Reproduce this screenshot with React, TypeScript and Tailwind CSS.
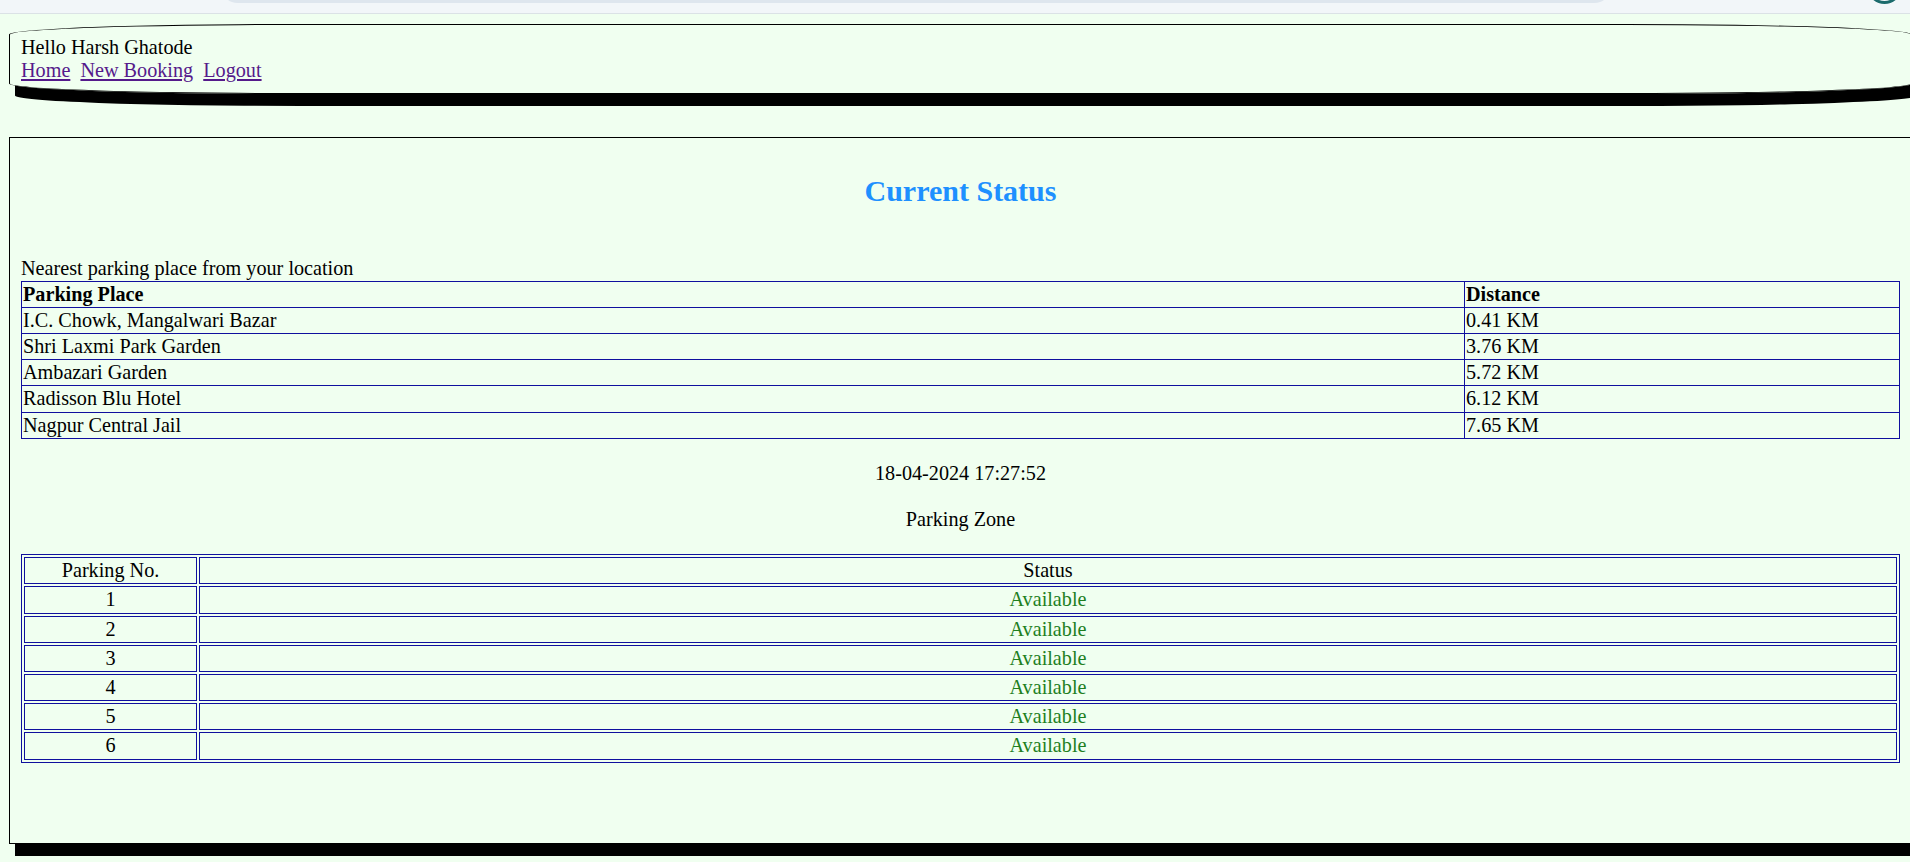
import React from 'react'

const places = [
    { name: 'I.C. Chowk, Mangalwari Bazar', dist: '0.41 KM' },
    { name: 'Shri Laxmi Park Garden', dist: '3.76 KM' },
    { name: 'Ambazari Garden', dist: '5.72 KM' },
    { name: 'Radisson Blu Hotel', dist: '6.12 KM' },
    { name: 'Nagpur Central Jail', dist: '7.65 KM' },
]

const slots = [1, 2, 3, 4, 5, 6]

export default function App() {
    return (
        <div className="min-h-screen w-full overflow-hidden bg-[#f0fff0] font-['Liberation_Serif',serif] text-[20.2px] leading-[23px] text-black">
            {/* browser chrome strip left in the screenshot */}
            <div className="flex h-[14px] overflow-hidden border-b border-[#dbe2e6] bg-[#f2f6f9]">
                <div className="w-[220px] shrink-0" />
                <div className="-mt-[33px] h-[36px] w-[1392px] shrink-0 rounded-full bg-[#dee6ee]" />
                <div className="flex-1" />
                <div className="mr-[8px] -mt-[31px] h-[35px] w-[35px] shrink-0 rounded-full border-[3px] border-[#1c6b6d]" />
            </div>

            {/* Header */}
            <div className="ml-[9px] mt-[10px] h-[70px] w-[1903px] rounded-[15%] border border-black px-[11px] pt-[11px] shadow-[6px_12px_0_0_#000]">
                <div>Hello Harsh Ghatode</div>
                <div>
                    <a href="#" className="text-[#551a8b] underline">Home</a>
                    {'\u00a0 '}
                    <a href="#" className="text-[#551a8b] underline">New Booking</a>
                    {'\u00a0 '}
                    <a href="#" className="text-[#551a8b] underline">Logout</a>
                </div>
            </div>

            {/* Main panel */}
            <div className="ml-[9px] mt-[43px] w-[1903px] border border-black p-[11px] shadow-[6px_12px_0_0_#000]">
                <h2 className="my-[25px] text-center text-[30px] font-bold leading-[34.5px] text-[#1e90ff]">Current Status</h2>
                <div className="h-[23px]" />
                <div>Nearest parking place from your location</div>
                <table className="mt-px w-full border-collapse">
                    <thead>
                        <tr>
                            <th className="w-[1443px] border border-[#10109e] p-px text-left font-bold leading-[23.2px]">Parking Place</th>
                            <th className="border border-[#10109e] p-px text-left font-bold leading-[23.2px]">Distance</th>
                        </tr>
                    </thead>
                    <tbody>
                        {places.map((p) => (
                            <tr key={p.name}>
                                <td className="border border-[#10109e] p-px leading-[23.2px]">{p.name}</td>
                                <td className="border border-[#10109e] p-px leading-[23.2px]">{p.dist}</td>
                            </tr>
                        ))}
                    </tbody>
                </table>

                <div className="mt-[23px] text-center">18-04-2024 17:27:52</div>
                <div className="mt-[23px] text-center">Parking Zone</div>

                <table className="mt-[23.5px] w-full border-separate border-spacing-[2px] border border-[#10109e]">
                    <tbody>
                        <tr>
                            <td className="w-[173px] border border-[#10109e] p-px text-center leading-[23.2px]">Parking No.</td>
                            <td className="border border-[#10109e] p-px text-center leading-[23.2px]">Status</td>
                        </tr>
                        {slots.map((n) => (
                            <tr key={n}>
                                <td className="border border-[#10109e] p-px text-center leading-[23.2px]">{n}</td>
                                <td className="border border-[#10109e] p-px text-center leading-[23.2px] text-[#1f7f1f]">Available</td>
                            </tr>
                        ))}
                    </tbody>
                </table>
                <div className="h-[69px]" />
            </div>
        </div>
    )
}
